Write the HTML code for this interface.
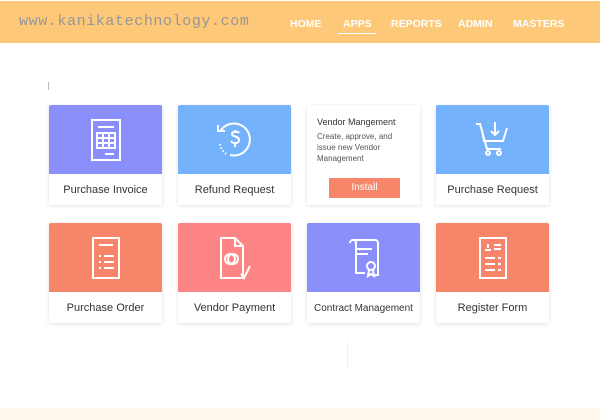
<!DOCTYPE html>
<html><head><meta charset="utf-8"><style>
*{margin:0;padding:0;box-sizing:border-box}
body{width:600px;height:420px;background:#fff;position:relative;overflow:hidden;font-family:"Liberation Sans",sans-serif}
.hdr{position:absolute;left:0;top:1px;width:600px;height:42px;background:#fdc878}
.logo{position:absolute;left:19px;top:13px;font-family:"Liberation Mono",monospace;font-size:15px;color:#979797;letter-spacing:0.6px}
.nav{position:absolute;top:18px;font-size:10.5px;font-weight:bold;color:#fff}
.ul{position:absolute;left:338px;top:33px;width:38px;height:1px;background:#fff}
.card{position:absolute;width:113px;height:100px;background:#fff;border-radius:2px;box-shadow:0 1px 4px rgba(0,0,0,.12);overflow:hidden}
.card .top{height:69px;display:flex;align-items:center;justify-content:center}
.card .lbl{height:31px;text-align:center;line-height:33px;font-size:11px;color:#333}
.bottom{position:absolute;left:0;top:408px;width:600px;height:12px;background:#fff8ec}
svg{display:block}
</style></head><body>
<div class="hdr"></div>
<div class="logo">www.kanikatechnology.com</div>
<div class="nav" style="left:290px">HOME</div>
<div class="nav" style="left:343px">APPS</div>
<div class="nav" style="left:391px">REPORTS</div>
<div class="nav" style="left:458px">ADMIN</div>
<div class="nav" style="left:513px">MASTERS</div>
<div class="ul"></div>
<div style="position:absolute;left:48px;top:82px;width:1px;height:8px;background:#bbb"></div>

<div class="card" style="left:49px;top:105px"><div class="top" style="background:#8b8ffb">
<svg width="36" height="44" viewBox="0 0 36 44" fill="none" stroke="#fff" stroke-width="2"><rect x="4" y="2" width="28" height="40"/><path d="M10 9h16M9 15h18v15H9zM9 20h18M9 25h18M15 15v15M21 15v15M17 36h9"/></svg>
</div><div class="lbl">Purchase Invoice</div></div>

<div class="card" style="left:178px;top:105px"><div class="top" style="background:#74b3fb">
<svg width="40" height="40" viewBox="0 0 40 40" fill="none" stroke="#fff" stroke-width="2"><path d="M6 10a16 16 0 1 1 9 25" /><path d="M3 5v6h7" /><path d="M5 24a16 16 0 0 0 8 11" stroke-dasharray="1.5 2"/><path d="M24 13c-1-2-7-2-7 1s7 2 7 6-6 4-8 1M20 10v3M20 24v3"/></svg>
</div><div class="lbl">Refund Request</div></div>

<div class="card" style="left:307px;top:105px;padding:12px 10px 0">
<div style="font-size:9px;color:#333">Vendor Mangement</div>
<div style="font-size:8px;color:#555;line-height:11px;margin-top:4px">Create, approve, and issue new Vendor Management</div>
<div style="position:absolute;left:22px;top:73px;width:71px;height:20px;background:#f7856a;color:#fff;font-size:10px;text-align:center;line-height:20px">Install</div>
</div>

<div class="card" style="left:436px;top:105px"><div class="top" style="background:#74b3fb">
<svg width="42" height="42" viewBox="0 0 42 42" fill="none" stroke="#fff" stroke-width="2"><path d="M4 5h4l7 25h14M10 11l2 11h19l4-13M23 3v13M19 12l4 4 4-4"/><circle cx="16" cy="34" r="2"/><circle cx="27" cy="34" r="2"/></svg>
</div><div class="lbl">Purchase Request</div></div>

<div class="card" style="left:49px;top:223px"><div class="top" style="background:#f7856a">
<svg width="36" height="44" viewBox="0 0 36 44" fill="none" stroke="#fff" stroke-width="2"><rect x="5" y="2" width="26" height="40"/><path d="M11 9h14M11 20h2M16 20h10M11 26h2M16 26h10M11 32h2M16 32h10"/></svg>
</div><div class="lbl">Purchase Order</div></div>

<div class="card" style="left:178px;top:223px"><div class="top" style="background:#fe8585">
<svg width="40" height="44" viewBox="0 0 40 44" fill="none" stroke="#fff" stroke-width="2"><path d="M6 2h14l8 8v32H6zM20 2v8h8"/><circle cx="15" cy="23" r="5"/><circle cx="18" cy="23" r="5"/><path d="M26 38l3 4 6-12"/></svg>
</div><div class="lbl">Vendor Payment</div></div>

<div class="card" style="left:307px;top:223px"><div class="top" style="background:#8b8ffb">
<svg width="40" height="44" viewBox="0 0 40 44" fill="none" stroke="#fff" stroke-width="2"><path d="M9 4h22a3 3 0 0 1 3 3v32h-3M6 7a3 3 0 0 1 6 0v30h9M12 13h16M12 18h12"/><circle cx="27" cy="30" r="4"/><path d="M25 34l-1 6 3-2 3 2-1-6"/></svg>
</div><div class="lbl" style="font-size:10px">Contract Management</div></div>

<div class="card" style="left:436px;top:223px"><div class="top" style="background:#f7856a">
<svg width="36" height="44" viewBox="0 0 36 44" fill="none" stroke="#fff" stroke-width="2"><rect x="5" y="2" width="26" height="40"/><path d="M13 8v4M10 14h6M19 9h7M19 13h7M10 22h10M23 22h3M10 28h10M23 28h3M10 34h10M23 34h3"/></svg>
</div><div class="lbl">Register Form</div></div>

<div style="position:absolute;left:347px;top:342px;width:1px;height:26px;background:#eee"></div>
<div class="bottom"></div>
</body></html>
